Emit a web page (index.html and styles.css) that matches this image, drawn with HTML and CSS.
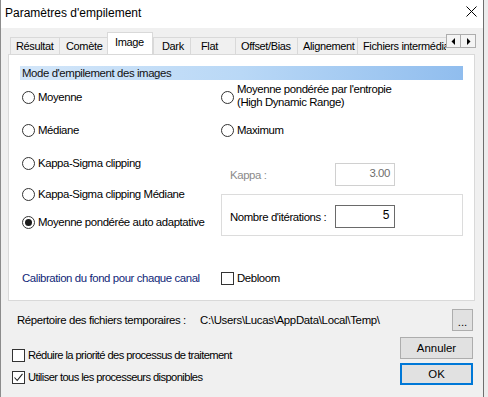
FILE: index.html
```html
<!DOCTYPE html>
<html lang="fr">
<head>
<meta charset="utf-8">
<title>Paramètres d'empilement</title>
<link rel="stylesheet" href="styles.css">
</head>
<body>
<div class="window">
  <div class="titlebar">
    <span class="title">Paramètres d'empilement</span>
    <svg class="close" width="11" height="11" viewBox="0 0 11 11"><path d="M0.5 0.5 L10.5 10.5 M10.5 0.5 L0.5 10.5" stroke="#000" stroke-width="1" fill="none"/></svg>
  </div>

  <div class="tabstrip">
    <div class="tabs">
      <div class="tab t1">Résultat</div>
      <div class="tab t2">Comète</div>
      <div class="tab t3 active">Image</div>
      <div class="tab t4">Dark</div>
      <div class="tab t5">Flat</div>
      <div class="tab t6">Offset/Bias</div>
      <div class="tab t7">Alignement</div>
      <div class="tab t8">Fichiers intermédiaires</div>
    </div>
    <div class="scroller">
      <div class="sbtn"><svg width="5" height="7" viewBox="0 0 5 7"><path d="M4 0 L4 7 L0.5 3.5 Z" fill="#000"/></svg></div>
      <div class="sbtn"><svg width="5" height="7" viewBox="0 0 5 7"><path d="M1 0 L1 7 L4.5 3.5 Z" fill="#000"/></svg></div>
    </div>
  </div>

  <div class="panel">
    <div class="header">Mode d'empilement des images</div>
    <div class="columns">
      <div class="col-left">
        <label class="radio r1"><span class="circle"></span>Moyenne</label>
        <label class="radio r2"><span class="circle"></span>Médiane</label>
        <label class="radio r3"><span class="circle"></span>Kappa-Sigma clipping</label>
        <label class="radio r4"><span class="circle"></span>Kappa-Sigma clipping Médiane</label>
        <label class="radio r5"><span class="circle checked"></span>Moyenne pondérée auto adaptative</label>
      </div>
      <div class="col-right">
        <label class="radio two"><span class="circle"></span><span class="twolines">Moyenne pondérée par l'entropie<br>(High Dynamic Range)</span></label>
        <label class="radio max"><span class="circle"></span>Maximum</label>
        <div class="field kappa">
          <span class="flabel disabled">Kappa :</span>
          <span class="input disabled">3.00</span>
        </div>
        <div class="groupbox">
          <div class="field">
            <span class="flabel">Nombre d'itérations :</span>
            <span class="input active">5</span>
          </div>
        </div>
      </div>
    </div>
    <div class="calib">
      <span class="calib-text">Calibration du fond pour chaque canal</span>
      <label class="check"><span class="box"></span>Debloom</label>
    </div>
  </div>

  <div class="dirrow">
    <span class="dirlabel">Répertoire des fichiers temporaires :</span>
    <span class="dirpath">C:\Users\Lucas\AppData\Local\Temp\</span>
    <span class="btn browse">...</span>
  </div>

  <div class="lower">
    <div class="checks">
      <label class="check"><span class="box"></span>Réduire la priorité des processus de traitement</label>
      <label class="check"><span class="box"><svg width="11" height="11" viewBox="0 0 11 11"><path d="M1.5 5.5 L4.2 8.5 L9.5 1.8" stroke="#222" stroke-width="1.1" fill="none"/></svg></span>Utiliser tous les processeurs disponibles</label>
    </div>
    <div class="buttons">
      <span class="btn cancel">Annuler</span>
      <span class="btn ok">OK</span>
    </div>
  </div>
</div>
</body>
</html>
```

FILE: styles.css
```css
* { box-sizing: border-box; }
html, body { margin: 0; padding: 0; }
body {
  background: #ececec;
  font-family: "Liberation Sans", Arial, sans-serif;
  font-size: 11.4px;
  letter-spacing: -0.4px;
  color: #000;
  width: 488px;
  height: 397px;
  overflow: hidden;
  white-space: nowrap;
}
.window {
  width: 484px;
  height: 397px;
  background: #f0f0f0;
  border-left: 1px solid #8c8c8c;
  border-right: 1px solid #6e6e6e;
  display: flex;
  flex-direction: column;
}
.titlebar {
  height: 28px;
  background: #fff;
  display: flex;
  align-items: center;
  padding-left: 4px;
  padding-right: 6px;
}
.title { font-size: 12px; letter-spacing: 0; flex: 1; margin-top: -2px; }
.close { margin-top: -6px; }

.tabstrip {
  height: 26px;
  display: flex;
  padding-left: 9px;
}
.tabs {
  width: 436px;
  display: flex;
  align-items: flex-end;
  overflow: hidden;
}
.tab {
  flex: none;
  height: 17px;
  border: 1px solid #d9d9d9;
  border-bottom: none;
  border-right: none;
  background: #f0f0f0;
  font-size: 11px;
  line-height: 16px;
  padding-left: 5px;
  letter-spacing: -0.35px;
}
.tab.active {
  height: 23px;
  margin-bottom: -1px;
  background: #fff;
  border-right: 1px solid #d9d9d9;
  position: relative;
  z-index: 1;
  line-height: 18px;
}
.t1 { width: 49px; }
.t2 { width: 48px; padding-left: 6px; }
.t3 { width: 46px; padding-left: 7px; }
.t4 { width: 37px; padding-left: 8px; }
.t5 { width: 45px; padding-left: 10px; }
.t6 { width: 62px; padding-left: 5px; }
.t7 { width: 60px; padding-left: 5px; }
.t8 { width: 100px; padding-left: 5px; }
.scroller {
  display: flex;
  margin-top: 6px;
  align-self: flex-start;
}
.sbtn {
  width: 15px;
  height: 14px;
  border: 1px solid #adadad;
  background: #f4f4f4;
  display: flex;
  align-items: center;
  justify-content: center;
}
.sbtn + .sbtn { border-left: none; }

.panel {
  margin-left: 7px;
  width: 467px;
  height: 247px;
  background: #fff;
  border: 1px solid #d9d9d9;
  padding: 11px 11px 0 11px;
}
.header {
  height: 14px;
  background: linear-gradient(to right, #d3e6f9 0%, #b9d8f6 50%, #90bdee 100%);
  padding-left: 2px;
  line-height: 14px;
  color: #111;
}
.columns {
  display: flex;
  margin-top: 4px;
  padding-left: 2px;
}
.col-left {
  width: 199px;
  display: flex;
  flex-direction: column;
  padding-top: 5px;
}
.col-right {
  width: 242px;
  display: flex;
  flex-direction: column;
}
.radio {
  display: flex;
  align-items: center;
  height: 16px;
}
.circle {
  width: 13px;
  height: 13px;
  border: 1px solid #333;
  border-radius: 50%;
  background: #fff;
  margin-right: 3px;
  flex: none;
  display: flex;
  align-items: center;
  justify-content: center;
}
.circle.checked::after {
  content: "";
  width: 7px;
  height: 7px;
  border-radius: 50%;
  background: #1a1a1a;
}
.r2 { margin-top: 17px; }
.r3 { margin-top: 17px; }
.r4 { margin-top: 15px; }
.r5 { margin-top: 12px; }
.radio.two { height: 26px; }
.twolines { line-height: 13px; margin-top: -3px; }
.radio.max { margin-top: 12px; }

.field {
  display: flex;
  align-items: center;
  height: 23px;
}
.kappa { margin-top: 25px; padding-left: 9px; }
.flabel { width: 105px; }
.flabel.disabled { color: #8a8a8a; }
.input {
  width: 60px;
  height: 23px;
  border: 1px solid #7a7a7a;
  background: #fff;
  text-align: right;
  padding-right: 4px;
  line-height: 19px;
}
.input.disabled { border-color: #d0d0d0; color: #6e6e6e; }
.input.active { font-size: 12px; line-height: 18px; padding-right: 5px; border-color: #6a6a6a; }
.groupbox {
  margin-top: 8px;
  height: 42px;
  border: 1px solid #dcdcdc;
  padding: 10px 0 0 8px;
}

.calib {
  display: flex;
  align-items: center;
  height: 16px;
  margin-top: 34px;
  padding-left: 2px;
}
.calib-text { width: 199px; color: #0f1f78; }
.check {
  display: flex;
  align-items: center;
  height: 16px;
}
.box {
  width: 13px;
  height: 13px;
  border: 1px solid #333;
  background: #fff;
  margin-right: 3px;
  flex: none;
  display: flex;
  align-items: center;
  justify-content: center;
}

.dirrow {
  display: flex;
  align-items: center;
  margin-top: 8px;
  height: 22px;
  padding-left: 16px;
}
.dirlabel { width: 183px; }
.dirpath { flex: 1; letter-spacing: -0.3px; }
.btn {
  background: #e1e1e1;
  border: 1px solid #adadad;
  display: flex;
  align-items: center;
  justify-content: center;
  letter-spacing: 0;
}
.browse {
  width: 21px;
  height: 22px;
  margin-right: 10px;
  padding-top: 3px;
}

.lower {
  display: flex;
  margin-top: 6px;
}
.checks {
  display: flex;
  flex-direction: column;
  padding-left: 11px;
  padding-top: 10px;
  gap: 6px;
  font-size: 11.2px;
  letter-spacing: -0.6px;
}
.buttons {
  margin-left: auto;
  margin-right: 10px;
  display: flex;
  flex-direction: column;
  gap: 4px;
}
.cancel { width: 73px; height: 22px; }
.ok {
  width: 73px;
  height: 22px;
  border: 2px solid #0078d7;
}
```
